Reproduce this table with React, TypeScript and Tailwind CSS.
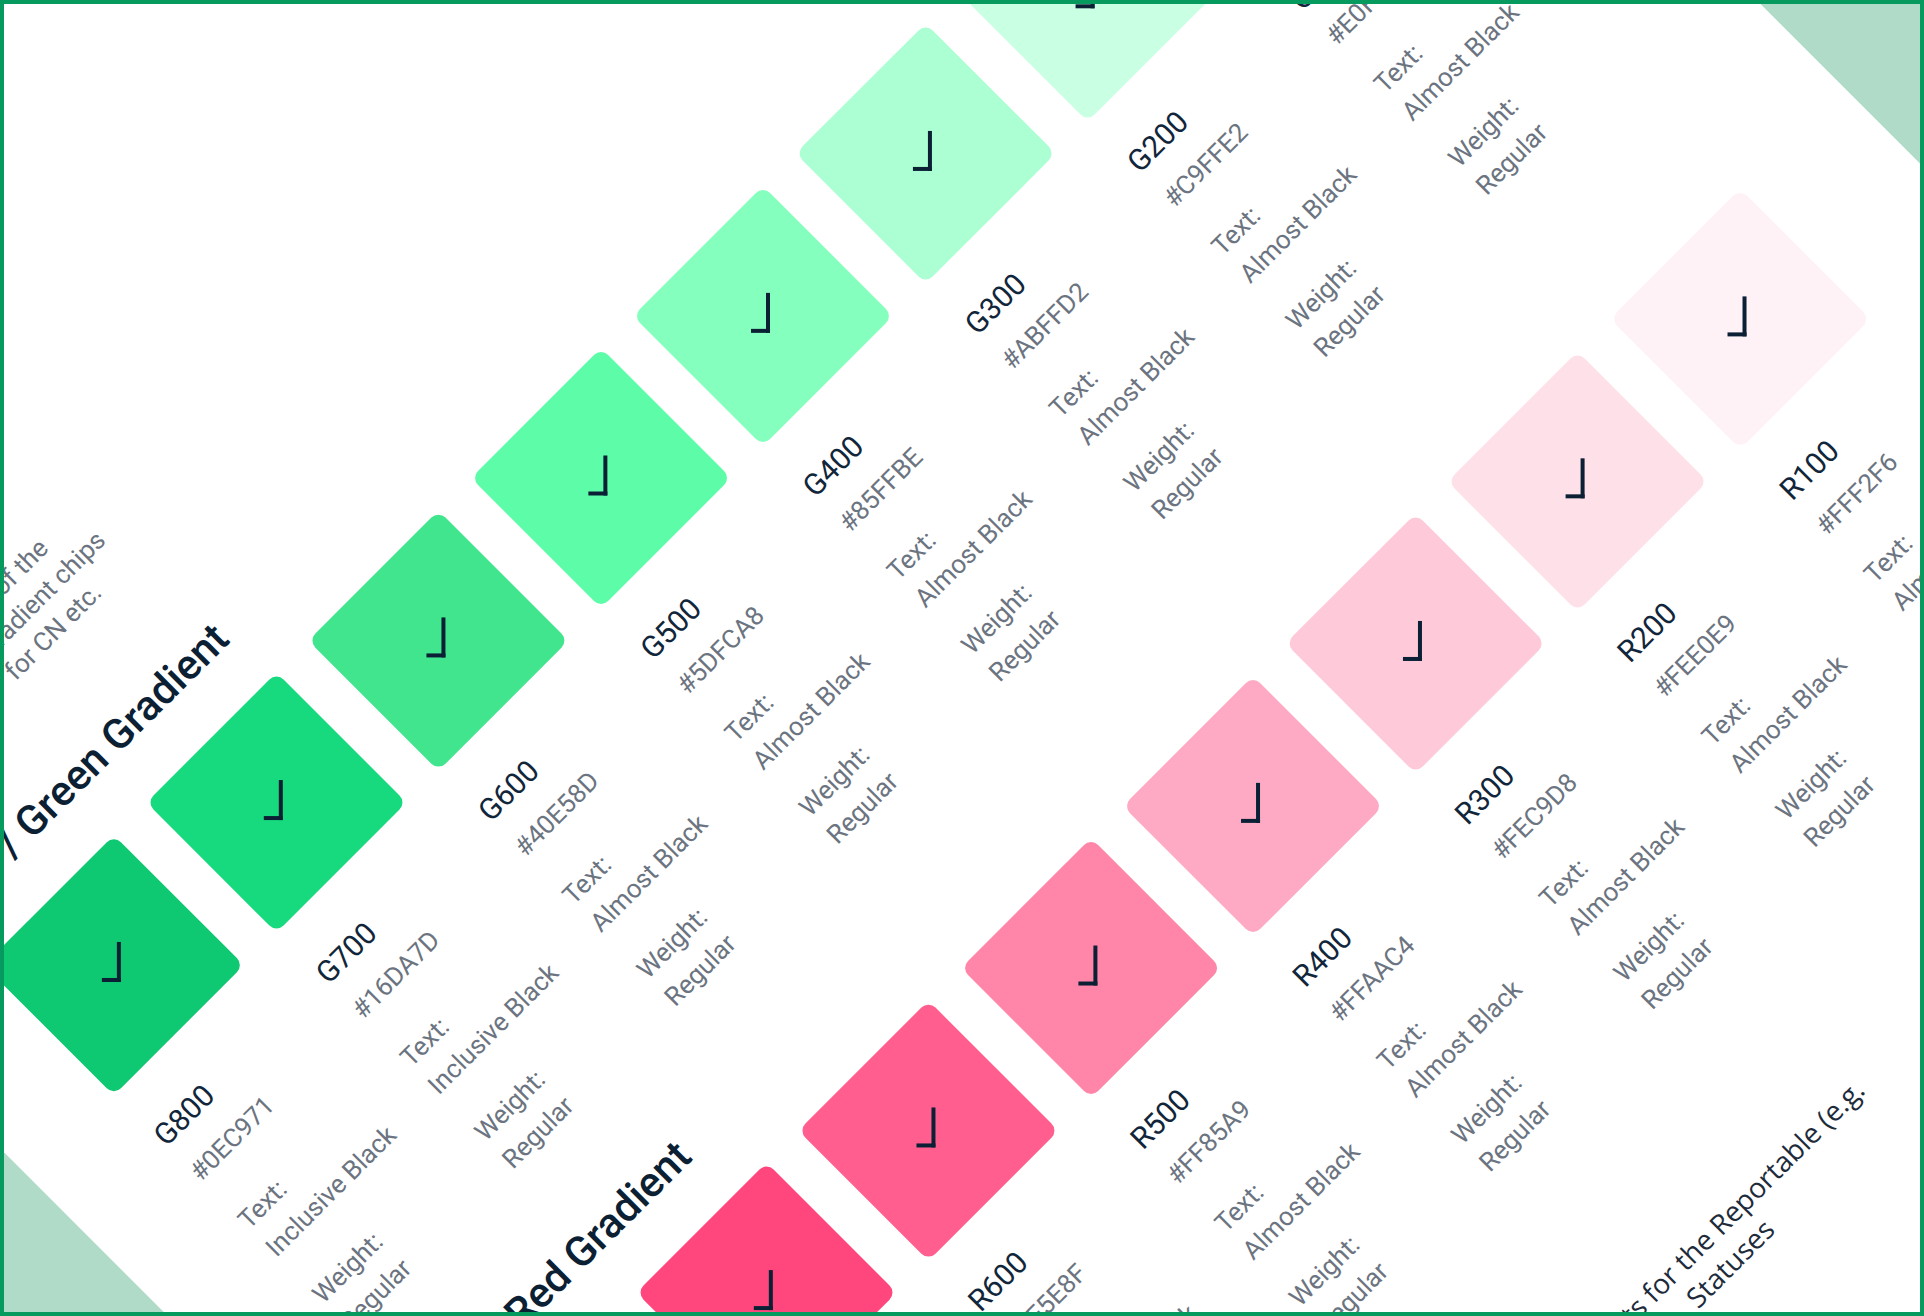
import React from "react";

type Swatch = { name: string; hex: string; bg: string; text: string };

const greens: Swatch[] = [
  { name: "G800", hex: "#0EC971", bg: "bg-[#0EC971]", text: "Inclusive Black" },
  { name: "G700", hex: "#16DA7D", bg: "bg-[#16DA7D]", text: "Inclusive Black" },
  { name: "G600", hex: "#40E58D", bg: "bg-[#40E58D]", text: "Almost Black" },
  { name: "G500", hex: "#5DFCA8", bg: "bg-[#5DFCA8]", text: "Almost Black" },
  { name: "G400", hex: "#85FFBE", bg: "bg-[#85FFBE]", text: "Almost Black" },
  { name: "G300", hex: "#ABFFD2", bg: "bg-[#ABFFD2]", text: "Almost Black" },
  { name: "G200", hex: "#C9FFE2", bg: "bg-[#C9FFE2]", text: "Almost Black" },
  { name: "G100", hex: "#E0FFEE", bg: "bg-[#E0FFEE]", text: "Almost Black" },
];

const reds: Swatch[] = [
  { name: "R800", hex: "#F0306B", bg: "bg-[#F0306B]", text: "Inclusive Black" },
  { name: "R700", hex: "#FF477E", bg: "bg-[#FF477E]", text: "Inclusive Black" },
  { name: "R600", hex: "#FF5E8F", bg: "bg-[#FF5E8F]", text: "Almost Black" },
  { name: "R500", hex: "#FF85A9", bg: "bg-[#FF85A9]", text: "Almost Black" },
  { name: "R400", hex: "#FFAAC4", bg: "bg-[#FFAAC4]", text: "Almost Black" },
  { name: "R300", hex: "#FEC9D8", bg: "bg-[#FEC9D8]", text: "Almost Black" },
  { name: "R200", hex: "#FEE0E9", bg: "bg-[#FEE0E9]", text: "Almost Black" },
  { name: "R100", hex: "#FFF2F6", bg: "bg-[#FFF2F6]", text: "Almost Black" },
];

// the selected tick: a right/bottom bordered box turned 45deg
function Check() {
  return <span className="-mt-[7px] block h-[40px] w-[19px] rotate-45 border-r-4 border-b-4 border-[#0b2035]" />;
}

function Chip({ s }: { s: Swatch }) {
  return (
    <div className="flex w-[184px] shrink-0 flex-col">
      <div className={`flex h-[184px] w-[184px] items-center justify-center rounded-[10px] ${s.bg}`}>
        <Check />
      </div>
      <div className="mt-[43px] whitespace-nowrap text-[26px] leading-[39px] text-[#6b7480]">
        <div className="text-[30px] leading-[42px] text-[#11263a]">{s.name}</div>
        <div className="mt-[10px]">{s.hex}</div>
        <div className="mt-[29px]">
          Text:
          <br />
          {s.text}
        </div>
        <div className="mt-[27px]">
          Weight:
          <br />
          Regular
        </div>
      </div>
    </div>
  );
}

function Section({ title, swatches }: { title: string; swatches: Swatch[] }) {
  return (
    <section>
      <h2 className="whitespace-nowrap text-[42px] leading-[52px] font-medium text-[#0c2034]">Chip / {title}</h2>
      <div className="mt-[42px] flex gap-[45.5px]">
        {swatches.map(s => (
          <Chip key={s.name} s={s} />
        ))}
      </div>
    </section>
  );
}

export default function App() {
  return (
    <div className="h-[1316px] w-[1924px] overflow-hidden border-4 border-[#079a5e] bg-[#b1dbc9] font-['Roboto',sans-serif]">
      <div className="h-[2400px] w-[2054px] origin-top-left translate-x-[-592.3px] translate-y-[556px] -rotate-45 bg-white pt-[418px] pl-[118px]">
        <p className="ml-[223px] w-[180px] text-[26px] leading-[34.5px] text-[#6b7480]">Use of the gradient chips for CN etc.</p>
        <div className="mt-[75px]">
          <Section title="Green Gradient" swatches={greens} />
        </div>
        <div className="mt-[69px]">
          <Section title="Red Gradient" swatches={reds} />
        </div>
        <p className="mt-[170px] ml-[764px] w-[520px] text-center font-['Open_Sans',sans-serif] text-[28px] leading-[35.3px] text-[#1d2b3a]">
          Gradients for the Reportable (e.g.
          <br />
          Statuses
        </p>
      </div>
    </div>
  );
}
